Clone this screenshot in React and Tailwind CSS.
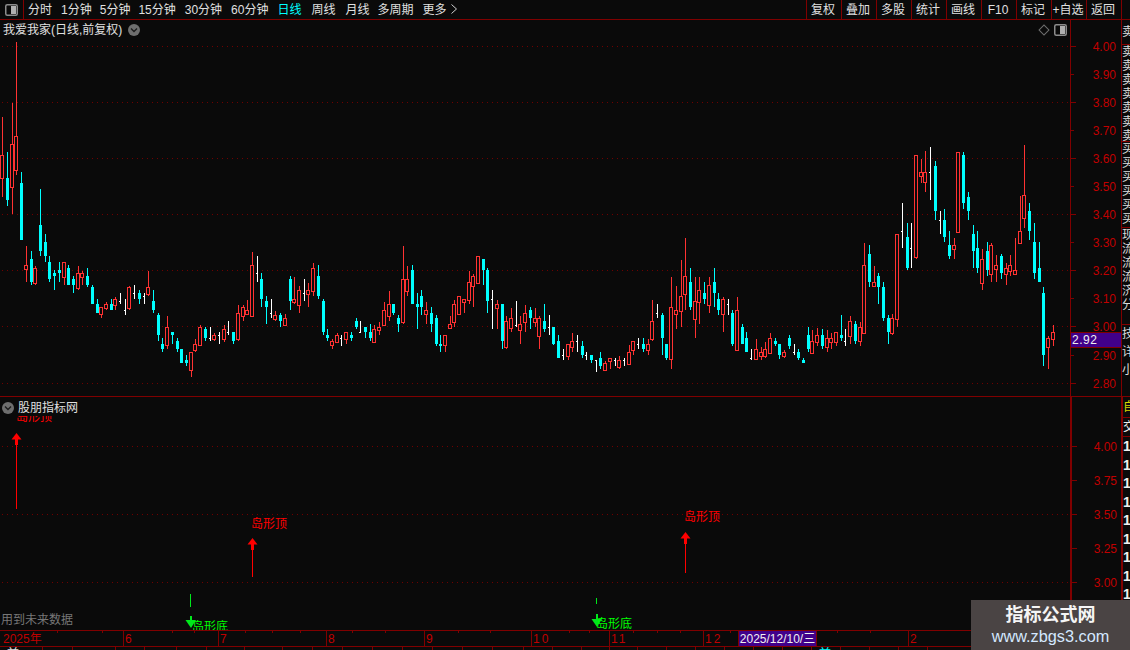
const RED = "#ff3232"
const LINE = "#800000"

// [type, wick top, body top, body bottom, wick bottom] in page pixels. w = flat day, body top is the tick
const candles = [
  ["r",117,155,178,197],["c",152,178,200,206],["r",103,144,187,214],["r",42,136,170,175],["c",172,183,240,240],
  ["r",246,265,269,282],["c",251,259,282,285],["r",266,268,283,285],["c",189,225,251,256],["c",234,242,256,262],
  ["c",256,262,279,282],["c",270,273,276,290],["c",262,270,273,282],["r",262,262,277,285],["c",265,268,285,285],
  ["c",276,279,285,293],["r",266,273,288,290],["r",271,273,277,285],["c",268,276,285,287],["c",285,287,304,304],
  ["c",299,304,313,313],["r",307,307,314,318],["r",302,304,308,310],["c",299,304,310,310],["r",297,299,305,310],
  ["w",293,301,0,304],["w",299,310,0,315],["r",286,287,308,310],["w",285,293,0,299],["c",290,293,299,304],
  ["w",293,296,0,304],["r",271,287,294,296],["c",290,301,310,313],["c",313,315,335,341],["c",338,344,349,352],
  ["r",316,327,345,349],["c",332,332,335,344],["c",338,341,349,352],["c",349,349,363,363],["c",355,360,363,366],
  ["r",352,352,370,377],["r",339,344,350,352],["r",325,327,345,346],["c",327,329,338,341],["w",327,338,0,341],
  ["r",333,335,339,341],["w",332,335,0,344],["r",325,329,339,342],["w",321,332,0,335],["c",332,332,341,344],
  ["r",305,313,339,341],["r",305,307,316,321],["r",300,310,314,315],["r",252,265,316,316],["w",256,273,0,282],
  ["c",273,279,299,307],["c",296,301,307,324],["w",299,313,0,318],["r",311,315,319,321],["c",313,315,321,327],
  ["r",314,318,325,325],["c",276,279,301,310],["r",277,299,302,304],["r",286,290,305,313],["w",279,293,0,301],
  ["r",283,290,294,307],["r",263,268,291,296],["c",265,276,296,299],["c",299,301,332,335],["c",329,335,338,341],
  ["r",339,341,345,349],["r",333,335,342,342],["w",335,338,0,346],["r",332,332,339,344],["c",332,335,338,341],
  ["c",318,321,327,329],["w",321,332,0,333],["c",327,327,332,338],["c",324,332,338,341],["r",325,329,342,342],
  ["r",322,327,330,335],["r",302,310,325,325],["r",291,304,316,321],["c",304,304,313,315],["c",315,318,324,332],
  ["r",246,279,322,324],["r",266,279,291,296],["c",265,270,304,304],["c",293,304,307,329],["c",290,296,307,315],
  ["r",302,310,314,324],["c",307,313,324,332],["c",315,318,344,346],["c",335,344,346,352],["r",335,335,345,352],
  ["r",316,324,328,329],["r",300,304,322,327],["r",296,296,314,315],["r",299,299,302,313],["r",271,282,300,304],
  ["r",274,276,286,307],["r",256,256,283,283],["c",259,259,270,285],["c",268,270,301,313],["w",290,299,0,329],
  ["r",300,304,308,329],["c",304,304,341,349],["r",316,321,347,349],["r",308,318,328,332],["w",301,325,0,327],
  ["r",316,324,330,344],["r",305,313,322,332],["c",307,310,318,329],["r",308,318,322,327],["r",316,318,336,349],
  ["c",304,321,329,332],["w",315,327,0,335],["c",327,327,344,345],["c",335,341,358,358],["w",349,355,0,360],
  ["r",344,344,356,360],["r",333,341,347,352],["w",335,341,0,352],["c",341,346,355,358],["w",352,355,0,360],
  ["c",355,355,360,363],["w",360,360,0,372],["c",352,358,366,369],["r",361,363,370,370],["r",358,358,361,369],
  ["w",358,360,0,366],["r",356,360,367,369],["w",358,360,0,366],["r",345,352,364,365],["r",341,341,350,355],
  ["w",338,344,0,349],["c",338,344,349,352],["r",339,344,350,355],["r",300,321,339,341],["w",304,313,0,318],
  ["c",313,315,338,355],["c",344,344,358,360],["r",277,307,359,369],["r",286,310,314,329],["r",260,296,311,327],
  ["r",238,276,294,310],["c",268,282,307,310],["r",277,301,319,338],["r",277,290,302,324],["c",282,293,299,304],
  ["r",277,285,305,313],["c",268,282,293,307],["c",293,299,310,315],["r",297,299,314,332],["w",299,304,0,315],
  ["c",310,313,344,346],["r",297,310,350,350],["c",324,327,344,344],["c",332,338,352,352],["w",349,358,0,360],
  ["r",339,349,359,360],["r",347,352,356,360],["r",342,349,356,358],["r",333,338,353,353],["c",338,341,344,346],
  ["c",344,344,355,359],["r",350,352,356,358],["c",335,338,346,349],["w",344,352,0,355],["c",349,352,358,360],
  ["c",358,360,363,363],["c",327,335,349,352],["r",330,341,353,353],["r",328,335,342,346],["c",329,335,346,349],
  ["r",330,338,347,352],["r",333,338,342,349],["r",332,332,342,346],["c",315,335,338,341],["w",329,341,0,346],
  ["r",316,321,336,344],["c",321,324,341,344],["r",322,327,341,346],["r",243,265,333,333],["c",245,254,282,287],
  ["r",266,282,286,287],["c",273,276,287,304],["c",282,287,318,321],["c",315,318,332,344],["r",314,318,333,335],
  ["r",234,234,319,327],["w",203,231,0,248],["c",223,237,268,270],["w",223,248,0,268],["r",155,155,257,259],
  ["r",159,172,176,183],["r",151,172,182,192],["w",147,172,0,200],["c",161,166,211,220],["w",211,220,0,234],
  ["c",209,220,237,242],["c",231,245,256,259],["r",238,245,249,259],["r",152,152,232,232],["c",152,155,203,209],
  ["c",192,197,211,220],["c",225,234,251,268],["c",231,248,268,273],["r",249,259,283,290],["c",242,251,270,276],
  ["r",243,245,274,282],["r",255,265,269,282],["c",254,256,273,279],["r",263,268,274,285],["r",255,265,271,276],
  ["r",238,270,274,274],["r",196,231,243,243],["r",145,195,218,228],["c",203,211,231,240],["c",223,242,273,279],
  ["c",242,268,282,282],["c",287,293,355,366],["r",336,338,347,369],["r",325,332,339,346],
]

function candleX(i) {
  return Math.round(2.3 + 4.71 * i)
}

function Candle({ c, i }) {
  const [type, wickTop, bodyTop, bodyBot, wickBot] = c
  const x = candleX(i)
  if (type == "w") {
    return <g fill="#ffffff">
      <rect x={x} y={wickTop} width="1" height={wickBot - wickTop} />
      <rect x={x - 1} y={bodyTop} width="1" height="1" />
    </g>
  }
  if (type == "c") {
    return <g fill="#00ffff">
      <rect x={x} y={wickTop} width="1" height={wickBot - wickTop} />
      <rect x={x - 1} y={bodyTop} width="3" height={bodyBot - bodyTop} />
    </g>
  }
  return <g>
    <rect x={x} y={wickTop} width="1" height={bodyTop - wickTop} fill={RED} />
    <rect x={x} y={bodyBot} width="1" height={wickBot - bodyBot} fill={RED} />
    <rect x={x - 1.5} y={bodyTop + 0.5} width="3" height={bodyBot - bodyTop} fill="#0a0a0a" stroke={RED} />
  </g>
}

function Dots({ ys }) {
  return ys.map((y) => <line key={y} x1="2" x2="1070" y1={y + 0.5} y2={y + 0.5} stroke="#700000" strokeDasharray="1 4" />)
}

function PanelIcon() {
  return <svg width="13" height="12" viewBox="0 0 13 12" fill="none">
    <rect x="0.75" y="0.75" width="11.5" height="10.5" rx="1.5" stroke="#8c8c8c" strokeWidth="1.5" />
    <rect x="6" y="2" width="5" height="8" fill="#b0b0b0" />
  </svg>
}

function Chevron() {
  return <svg width="12" height="12" viewBox="0 0 12 12">
    <circle cx="6" cy="6" r="6" fill="#6e6e6e" />
    <path d="M3 4.5 L6 7.5 L9 4.5" fill="none" stroke="#1c1c1c" strokeWidth="1.4" />
  </svg>
}

function UpArrow({ x, tip, bottom }) {
  return <g fill="#ff0000">
    <path d={`M${x + 0.5} ${tip} L${x + 5.5} ${tip + 6.5} L${x - 4.5} ${tip + 6.5} Z`} />
    <rect x={x - 1} y={tip + 6} width="3" height="6" />
    <rect x={x} y={tip + 10} width="1" height={bottom - tip - 10} />
  </g>
}

function DownArrow({ x, top, head }) {
  return <g fill="#00e81c">
    <rect x={x} y={top} width="2" height={head - top + 2} />
    <path d={`M${x - 4.5} ${head} L${x + 6} ${head} L${x + 1} ${head + 8} Z`} />
  </g>
}

function Axis({ from, height, labels, minorEvery }) {
  return <svg width="50" height={height} viewBox={`0 ${from} 50 ${height}`} className="absolute inset-0" shapeRendering="crispEdges">
    {labels.map(([text, y], i) => <g key={text}>
      <rect x="0" y={y} width={i % minorEvery == 0 ? 5 : 3} height="1" fill={LINE} />
      <text x="45" y={y + 5} textAnchor="end" fontSize="12" fill="#c00000" shapeRendering="auto">{text}</text>
    </g>)}
  </svg>
}

function StripCell({ text, h }) {
  return <div className={`overflow-hidden border-b border-[#800000] text-[12px] leading-[14px] text-[#dcdcdc] ${h}`}>
    {text.split("").map((t, i) => <div key={i} className="w-[12px]">{t}</div>)}
  </div>
}

const tabs = [
  ["分时", ""], ["1分钟", "mr-[-1px]"], ["5分钟", "mr-[-1px]"], ["15分钟", ""], ["30分钟", ""], ["60分钟", ""],
  ["日线", "mr-[1px] text-[#00ffff]"], ["周线", "mr-[1px]"], ["月线", "mr-[-1px]"], ["多周期", ""], ["更多", ""],
]
const tools = ["复权", "叠加", "多股", "统计", "画线", "F10", "标记", "+自选", "返回"]
const upperLabels = [["4.00",46],["3.90",74],["3.80",102],["3.70",130],["3.60",158],["3.50",186],["3.40",214],["3.30",242],["3.20",270],["3.10",298],["3.00",326],["2.90",355],["2.80",383]]
const lowerLabels = [["4.00",446],["3.75",480],["3.50",514],["3.25",548],["3.00",582]]
const months = [["2025年","w-[123px]"],["6","w-[95px]"],["7","w-[108px]"],["8","w-[98px]"],["9","w-[107px]"],["10","w-[78px]"],["11","w-[94px]"],["12","w-[35px]"]]
const dateTicks = [57,102,172,194,245,272,300,352,385,458,490,569,589,633,657,680,730,837,870]
const footCells = ["w-[43px]","w-[30px]","w-[43px]","w-[29px]","w-[32px]","w-[30px]","w-[38px]","w-[38px]","w-[30px]","w-[30px]","w-[30px]","w-[30px]","w-[30px]","w-[30px]","w-[30px]","w-[31px]","w-[29px]","w-[29px]","w-[28px]","w-[28px]","w-[29px]","w-[29px]","w-[29px]","w-[29px]","w-[29px]","w-[29px]","w-[29px]","w-[29px]","w-[29px]","w-[29px]"]

export default function App() {
  return (
    <div className="relative flex h-[650px] w-[1130px] flex-col overflow-hidden bg-[#0a0a0a] font-['Liberation_Sans','Noto_Sans_CJK_SC',sans-serif] text-[12px] text-[#e0e0e0]">
      <div className="flex h-[20px] shrink-0 items-center border-b border-[#800000]">
        <div className="flex h-full w-[24px] items-center justify-center border-r border-[#800000] pr-[1px]">
          <PanelIcon />
        </div>
        <div className="flex gap-[9px] pl-[4px]">
          {tabs.map(([t, extra]) => <span key={t} className={extra}>{t}</span>)}
          <svg width="8" height="16" viewBox="0 0 8 16" className="-ml-[6px]">
            <path d="M1.5 3.5 L6.5 8 L1.5 12.5" fill="none" stroke="#d0d0d0" />
          </svg>
        </div>
        <div className="ml-auto mr-[8px] flex h-full border-r border-[#800000]">
          {tools.map((t) => <div key={t} className="flex w-[35px] items-center justify-center whitespace-nowrap border-l border-[#800000] pr-[2px]">{t}</div>)}
        </div>
      </div>

      <div className="flex h-[377px] shrink-0 border-b border-[#800000]">
        <div className="relative w-[1070px]">
          <svg width="1070" height="376" viewBox="0 20 1070 376" className="absolute inset-0" shapeRendering="crispEdges">
            <Dots ys={[46, 102, 158, 214, 270, 326, 383]} />
            {candles.map((c, i) => <Candle key={i} c={c} i={i} />)}
          </svg>
          <div className="relative flex h-[19px] items-center pl-[3px] pt-[1px]">
            <span>我爱我家(日线,前复权)</span>
            <span className="ml-[6px] flex"><Chevron /></span>
            <div className="ml-auto mr-[3px] flex items-center gap-[6px]">
              <div className="h-[8px] w-[8px] rotate-45 border border-[#6e6e6e]" />
              <PanelIcon />
            </div>
          </div>
        </div>
        <div className="relative w-[51px] border-l border-[#800000]">
          <Axis from={20} height={376} labels={upperLabels} minorEvery={2} />
          <div className="absolute left-0 right-0 top-[312px] flex h-[16px] items-center border-y border-[#800000] bg-[#41008a] pl-[1px] tracking-[0.5px] text-[#f0f0f0]">2.92</div>
        </div>
        <div className="w-[9px] overflow-hidden border-l border-[#800000] pt-[5px]">
          <StripCell text="卖" h="h-[20px]" />
          <StripCell text="卖卖卖卖卖卖卖" h="h-[97px]" />
          <StripCell text="买买买买买买" h="h-[86px]" />
          <StripCell text="现流流流济分" h="h-[97px]" />
          <div className="text-[12px] leading-[18px] text-[#dcdcdc]">
            <div className="w-[12px]">技</div>
            <div className="w-[12px]">详</div>
            <div className="w-[12px]">小</div>
          </div>
        </div>
      </div>

      <div className="flex h-[233px] shrink-0">
        <div className="relative w-[1070px]">
          <svg width="1070" height="233" viewBox="0 397 1070 233" className="absolute inset-0">
            <g shapeRendering="crispEdges"><Dots ys={[446, 514, 582]} /></g>
            <clipPath id="cut"><rect x="0" y="416" width="200" height="20" /></clipPath>
            <text x="16" y="421" fontSize="12" fill="#ff0000" clipPath="url(#cut)">岛形顶</text>
            <UpArrow x={16} tip={433} bottom={509} />
            <text x="251" y="528" fontSize="12" fill="#ff0000">岛形顶</text>
            <UpArrow x={252} tip={538} bottom={577} />
            <text x="684" y="521" fontSize="12" fill="#ff0000">岛形顶</text>
            <UpArrow x={685} tip={532} bottom={573} />
            <rect x="190" y="594" width="1" height="13" fill="#00e81c" />
            <DownArrow x={190} top={616} head={620} />
            <text x="192" y="631" fontSize="12" fill="#00ff00">岛形底</text>
            <rect x="596" y="598" width="1" height="6" fill="#00e81c" />
            <DownArrow x={596} top={614} head={619} />
            <text x="596" y="628" fontSize="12" fill="#00ff00">岛形底</text>
          </svg>
          <div className="relative flex items-center gap-[4px] pl-[2px] pt-[2px]">
            <Chevron />
            <span>股朋指标网</span>
          </div>
          <div className="absolute bottom-[1px] left-[1px] text-[#777777]">用到未来数据</div>
        </div>
        <div className="relative w-[51px] border-l-2 border-[#800000]">
          <Axis from={397} height={233} labels={lowerLabels} minorEvery={1} />
        </div>
        <div className="w-[9px] overflow-hidden border-l-2 border-[#800000] text-[#f0f0f0]">
          <div className="h-[21px] w-[12px] border-b border-[#800000] leading-[20px] text-[#d8d800]">自</div>
          <div className="h-[19px] w-[12px] border-b border-[#800000]">交</div>
          {[0, 1, 2, 3, 4, 5, 6, 7, 8, 9].map((i) => <div key={i} className="h-[18.5px] text-[14px] font-bold leading-[19px]">1</div>)}
        </div>
      </div>

      <div className="relative flex h-[17px] shrink-0 items-center border-y border-[#800000] text-[#c00000]">
        <svg width="1130" height="3" className="absolute left-0 top-0" shapeRendering="crispEdges">
          {dateTicks.map((x) => <rect key={x} x={x} y="0" width="1" height="2" fill={LINE} />)}
        </svg>
        {months.map(([t, w], i) => <div key={t} className={`flex h-full items-center ${w} ${i ? "border-l border-[#800000] pl-[1px] tracking-[2px]" : "pl-[3px]"}`}>{t}</div>)}
        <div className="flex h-full w-[79px] items-center justify-center border-x border-[#800000] bg-[#41008a] whitespace-nowrap text-[#f0f0f0]">2025/12/10/三</div>
        <div className="flex h-full w-[91px]" />
        <div className="flex h-full items-center border-l border-[#800000] pl-[1px]">2</div>
      </div>

      <div className="flex h-[3px] shrink-0 overflow-hidden leading-[14px]">
        {footCells.map((w, i) => <div key={i} className={`h-full shrink-0 border-r border-[#800000] pl-[7px] ${w} ${i == 26 ? "text-[#00ffff]" : ""}`}>{i == 0 || i == 26 ? "前" : ""}</div>)}
      </div>

      <div className="absolute bottom-0 right-0 flex h-[50px] w-[159px] flex-col items-center bg-[#4a4444] pt-[4px]">
        <span className="text-[18px] font-bold leading-[22px] text-[#f5f5f5]">指标公式网</span>
        <span className="text-[16.3px] leading-[20px] text-[#d4e8ff]">www.zbgs3.com</span>
      </div>
    </div>
  )
}
